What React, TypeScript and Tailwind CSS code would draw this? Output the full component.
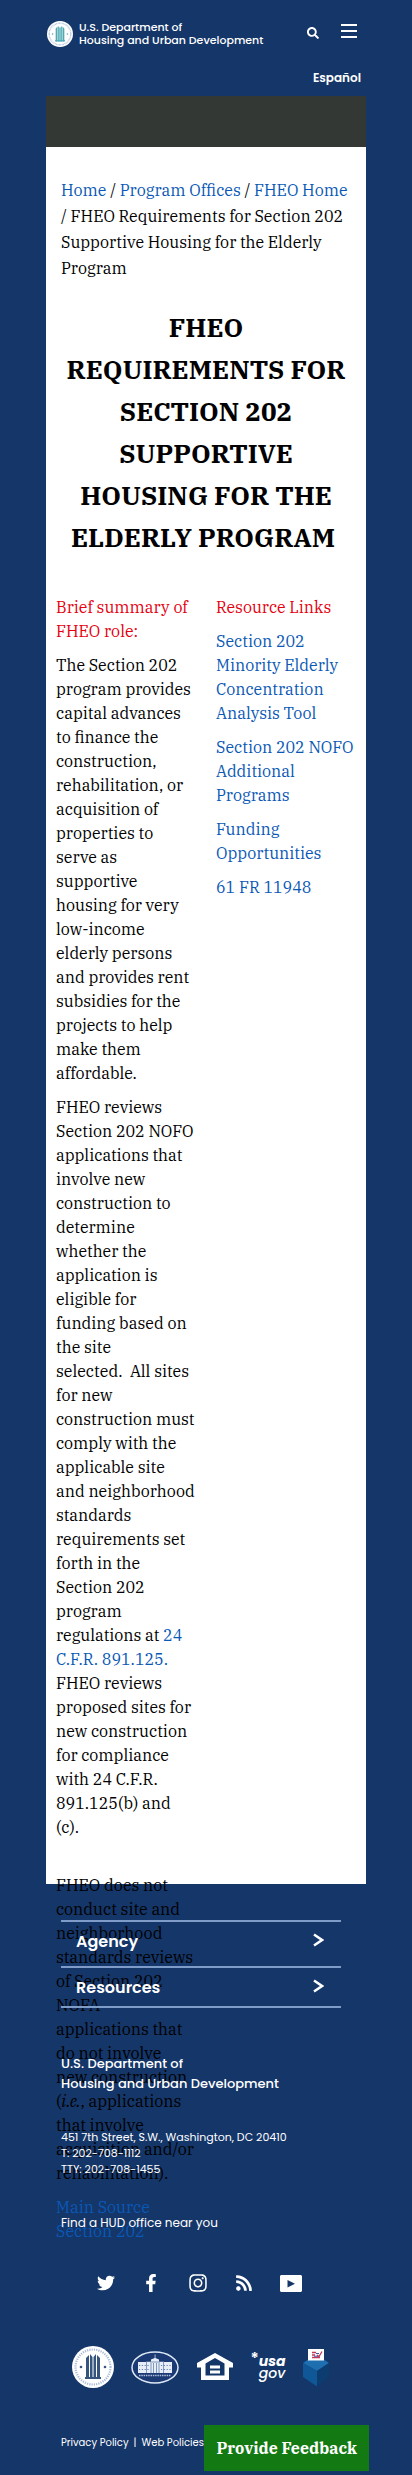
import { FaFacebookF, FaInstagram, FaRss, FaSearch, FaTwitter } from "react-icons/fa";

const link = "text-[#0a58b5]";

function Seal({ className, inner }: { className: string; inner: string }) {
  return (
    <svg viewBox="0 0 42 42" className={className} aria-hidden="true">
      <circle cx="21" cy="21" r="21" fill="#fff" />
      <circle cx="21" cy="21" r="17.5" fill="none" stroke="#a9bad5" strokeWidth="2.2" strokeDasharray="1.2 1.1" />
      <g fill={inner}>
        <path d="M14 12l3-3v24h-3zM18 8l2.5 3v22H18zM21.5 11L24 8v25h-2.500zM25 9l3 3v21h-3z" />
        <path d="M13 31h16v2H13z" />
        <circle cx="9" cy="21" r="1.300" />
        <circle cx="33" cy="21" r="1.300" />
      </g>
    </svg>
  );
}

function WhiteHouse() {
  return (
    <svg viewBox="0 0 48 33" className="h-[33px] w-12" aria-hidden="true">
      <ellipse cx="24" cy="16.500" rx="23" ry="15.500" fill="#1b3a74" stroke="#dfe8f5" strokeWidth="1.500" />
      <path
        fill="#e8eef8"
        d="M23.700 3.500h.7V7l3.600 1.500v2.300h5V11h8v11H7V11h8v-.2h5V8.500L23.700 7z"
      />
      <path
        stroke="#6681b0"
        strokeWidth="1"
        strokeDasharray="1.200 1.600"
        fill="none"
        d="M8 14.500h10M8 18.500h10M30 14.500h11M30 18.500h11"
      />
      <path stroke="#6681b0" strokeWidth=".8" fill="none" d="M15.500 11v11M20 12v10M22.500 12v10M25.500 12v10M28 12v10M32.500 11v11M19 11h10" />
      <path stroke="#aebfdb" strokeWidth="1.600" strokeDasharray="1.500 .8" fill="none" d="M8 24.500h32" />
    </svg>
  );
}

function EqualHousing() {
  return (
    <svg viewBox="0 0 36 28" className="h-7 w-9" aria-hidden="true">
      <path fill="#fff" fillRule="evenodd" d="M18 0L0 10v4.500h4V27h28V14.500h4V10zM18 5l9.500 5.500V22.500h-19V10.500z" />
      <path fill="#fff" d="M13 12.500h10v3H13zM13 17.500h10v3H13z" />
    </svg>
  );
}

function BallotBox() {
  return (
    <svg viewBox="0 0 26 39" className="h-[39px] w-[26px]" aria-hidden="true">
      <path fill="#1d6fb0" d="M0 15l6-4h14l6 4-12 8z" />
      <path fill="#0f5796" d="M0 15l14 8v15.500L0 29z" />
      <path fill="#0d3c70" d="M26 15l-12 8v15.500L26 29z" />
      <path fill="#fff" d="M5 1h16v11.500H5z" />
      <path fill="none" stroke="#c2375b" strokeWidth="1.300" d="M9 4.500h4M9 7h3M9 9.500h8M14 7l2 1.500 3-5" />
      <path fill="none" stroke="#3b5f9c" strokeWidth="1" d="M13 5.500h3M11 8.200h4" />
    </svg>
  );
}

function InstagramGlyph() {
  return <FaInstagram className="h-5 w-5" />;
}

function YouTube() {
  return (
    <svg viewBox="0 0 22 17" className="h-[17px] w-[22px]" aria-hidden="true">
      <path fill="#fff" fillRule="evenodd" d="M1 0h20l1 1v15l-1 1H1l-1-1V1zM7.500 5v7.500l7.500-3.700z" />
    </svg>
  );
}

function FooterMenu({ label }: { label: string }) {
  return (
    <button
      type="button"
      className="flex h-10 w-full items-center justify-between border-t-2 border-[#7f9cc9] pt-0.5 pr-[17px] pl-[15px] text-left text-base font-semibold"
    >
      {label}
      <svg viewBox="0 0 11 14" className="mb-1 h-3.5 w-[11px]" aria-hidden="true">
        <path d="M1 1.500l8 5.500-8 5.500" fill="none" stroke="#fff" strokeWidth="2.500" />
      </svg>
    </button>
  );
}

export default function App() {
  return (
    <div className="min-h-screen bg-[#153669] font-[family-name:'IBM_Plex_Serif','Noto_Serif','DejaVu_Serif_Condensed',serif] text-base text-black">
      <div className="mx-auto max-w-[320px]">
        <header className="h-24 font-[family-name:Poppins,Inter,sans-serif] text-white">
          <div className="flex items-start pt-[21px]">
            <a href="#home" className="flex items-center pl-px text-[11px] leading-[13px] font-medium">
              <Seal className="mr-1.5 h-[26px] w-[26px]" inner="#4fa9b4" />
              <span className="whitespace-nowrap">
                U.S. Department of
                <br />
                Housing and Urban Development
              </span>
            </a>
            <button type="button" aria-label="Search" className="mt-1.5 ml-auto">
              <FaSearch className="h-3 w-3" />
            </button>
            <button type="button" aria-label="Menu" className="mt-[3px] mr-[9px] ml-[22px] flex w-4 flex-col gap-1">
              <span className="h-[2px] w-full bg-white" />
              <span className="h-[2px] w-full bg-white" />
              <span className="h-[2px] w-full bg-white" />
            </button>
          </div>
          <div className="pt-[22px] pr-[5px] text-right text-xs leading-[18px] font-semibold">
            <a href="#es">Español</a>
          </div>
        </header>

        <main className="bg-white">
          <div className="h-[51px] bg-[#343834]" />
          <nav aria-label="Breadcrumb" className="px-[15px] pt-[30px] leading-[26px]">
            <a href="#home" className={link}>Home</a> / <a href="#offices" className={link}>Program Offices</a> /{" "}
            <a href="#fheo" className={link}>FHEO Home</a> / FHEO Requirements for Section 202 Supportive Housing for
            the Elderly Program
          </nav>
          <h1 className="px-[15px] pt-[25px] text-center text-[26px] leading-[42px] font-bold">
            FHEO REQUIREMENTS FOR SECTION 202 SUPPORTIVE HOUSING FOR THE ELDERLY PROGRAM&nbsp;
          </h1>

          <div className="grid grid-cols-2 pt-[37px] leading-6">
            <section className="flex flex-col gap-2.5 px-2.5">
              <h2 className="text-[#e6000f]">Brief summary of FHEO role:</h2>
              <p>
                The Section 202 program provides capital advances to finance the construction, rehabilitation, or
                acquisition of properties to serve as supportive housing for very low-income elderly persons and
                provides rent subsidies for the projects to help make them affordable.
              </p>
              <p>
                FHEO reviews Section 202 NOFO applications that involve new construction to determine whether the
                application is eligible for funding based on the site selected.&nbsp;&nbsp;All sites for new
                construction must comply with the applicable site and neighborhood standards requirements set forth
                in the Section 202 program regulations at{" "}
                <a href="#cfr" className={link}>24 C.F.R. 891.125.</a> FHEO reviews proposed sites for new
                construction for compliance with 24 C.F.R. 891.125(b) and (c).
              </p>
              <div className="h-[35px]">
                <div className="flex flex-col gap-2.5 pt-6">
                  <p>
                    FHEO does not conduct site and neighborhood standards reviews of Section 202 NOFA applications
                    that do not involve new construction (<em>i.e.</em>, applications that involve acquisition
                    and/or rehabilitation).
                  </p>
                  <a href="#source" className={link}>Main Source Section 202</a>
                </div>
              </div>
            </section>
            <section className="flex flex-col gap-2.5 pr-[5px] pl-2.5">
              <h2 className="text-[#e6000f]">Resource Links</h2>
              <a href="#tool" className={link}>Section 202 Minority Elderly Concentration Analysis Tool</a>
              <a href="#nofo" className={link}>Section 202 NOFO Additional Programs</a>
              <a href="#funding" className={link}>Funding Opportunities</a>
              <a href="#fr" className={link}>61 FR 11948</a>
            </section>
          </div>
        </main>

        <footer className="relative px-[15px] pt-9 font-[family-name:Poppins,Inter,sans-serif] text-white">
          <div className="mr-2.5 flex flex-col gap-1.5 border-b-2 border-[#7f9cc9]">
            <FooterMenu label="Agency" />
            <FooterMenu label="Resources" />
          </div>
          <p className="pt-[46px] text-[13px] leading-5 font-medium">
            U.S. Department of
            <br />
            Housing and Urban Development
          </p>
          <p className="pt-[35px] text-[11px] leading-4">
            451 7th Street, S.W., Washington, DC 20410
            <br />
            T: 202-708-1112
            <br />
            TTY: 202-708-1455
          </p>
          <p className="pt-[37px] text-xs leading-[18px]">
            <a href="#offices">Find a HUD office near you</a>
          </p>
          <div className="flex items-center justify-between pt-[41px] pr-[49px] pl-9">
            <a href="#twitter" aria-label="Twitter"><FaTwitter className="h-[18px] w-[18px]" /></a>
            <a href="#facebook" aria-label="Facebook"><FaFacebookF className="h-[18px] w-[18px]" /></a>
            <a href="#instagram" aria-label="Instagram"><InstagramGlyph /></a>
            <a href="#rss" aria-label="RSS"><FaRss className="h-[18px] w-[18px]" /></a>
            <a href="#youtube" aria-label="YouTube"><YouTube /></a>
          </div>
          <div className="flex items-center justify-between pt-[53px] pr-[22px] pl-[11px]">
            <Seal className="h-[42px] w-[42px]" inner="#35557f" />
            <WhiteHouse />
            <EqualHousing />
            <span className="flex">
              <span className="-mt-1.5 text-base leading-5 font-semibold">*</span>
              <span className="text-[14px] leading-3 font-bold italic">
                usa
                <br />
                <span className="font-medium">gov</span>
              </span>
            </span>
            <BallotBox />
          </div>
          <div className="pt-[46px] pb-5 text-[10px] leading-[17px]">
            <a href="#privacy">Privacy Policy</a>
            <span className="px-[5px]">|</span>
            <a href="#policies">Web Policies</a>
          </div>
        </footer>
      </div>
      <button
        type="button"
        className="fixed right-[43px] bottom-1 h-[46px] bg-[#137a13] px-3 text-base font-bold text-white"
      >
        Provide Feedback
      </button>
    </div>
  );
}
